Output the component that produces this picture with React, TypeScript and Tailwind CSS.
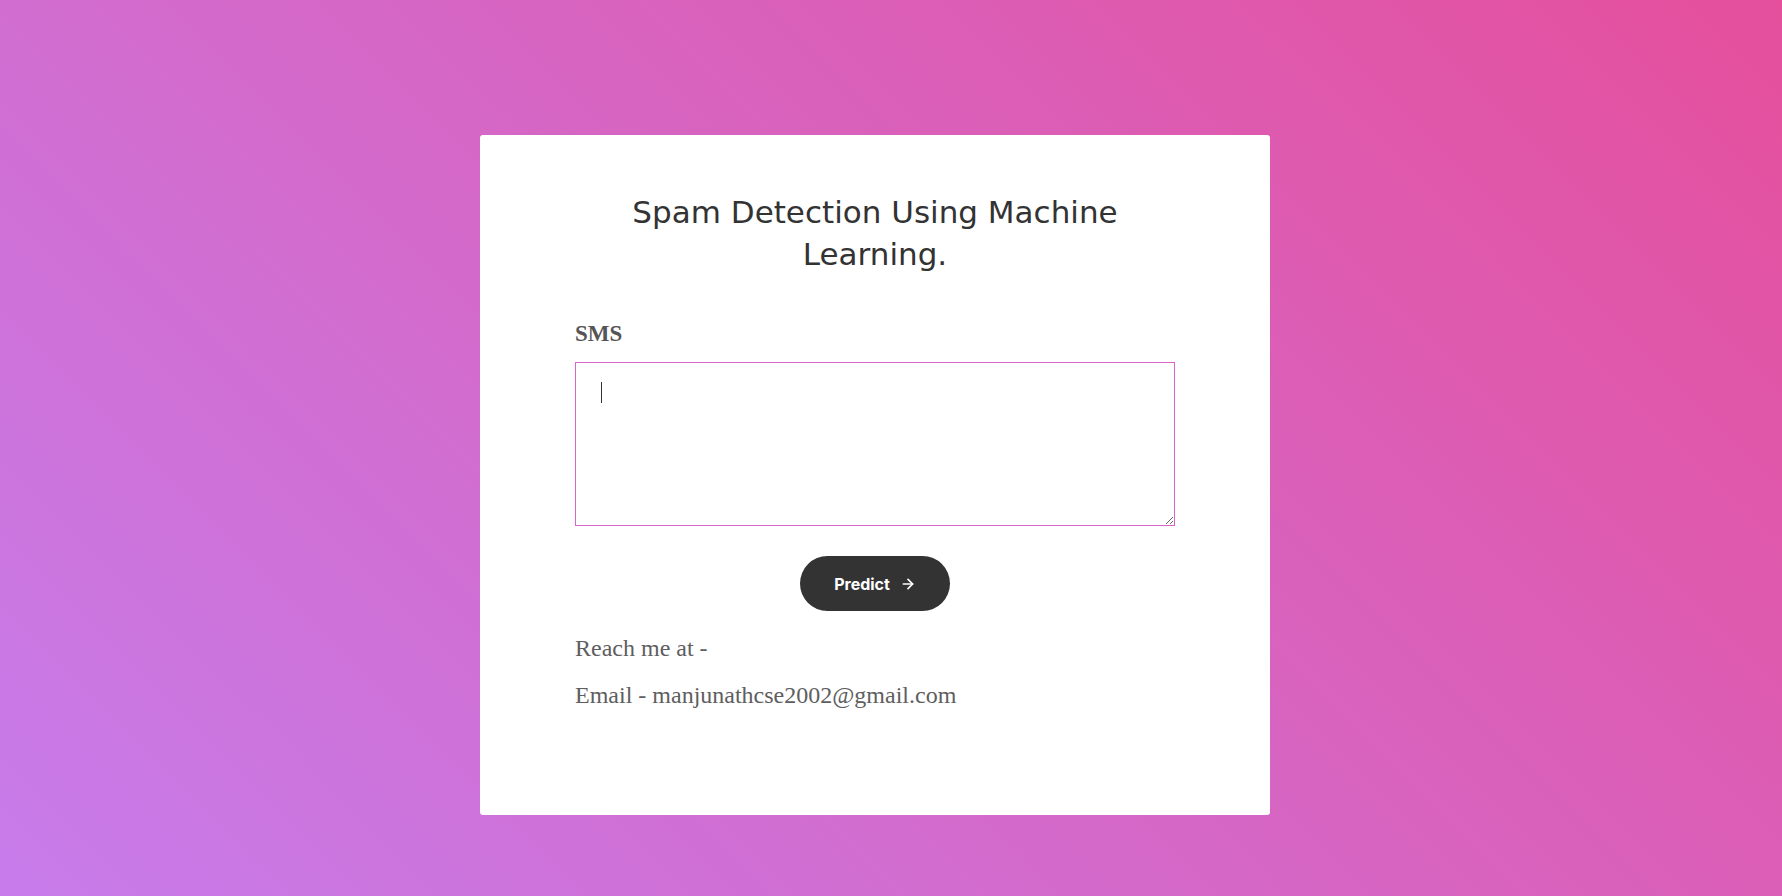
import React from "react";
import { ArrowRight } from "lucide-react";

export default function App() {
  return (
    <div className="w-full h-[896px] overflow-hidden bg-[linear-gradient(45deg,#c77ceb,#e54f9c)] flex justify-center pr-[32px]">
      <div className="mt-[135px] w-[790px] h-[680px] bg-white rounded-[3px] flex flex-col items-center">
        <h1 className="mt-[56px] text-center text-[31px] leading-[42px] text-[#333] font-normal font-['Comic_Sans_MS','DejaVu_Sans',sans-serif]">
          Spam Detection Using Machine
          <br />
          Learning.
        </h1>
        <div className="w-[600px] mt-[46px] flex flex-col">
          <label className="text-[23px] leading-[26px] font-bold text-[#555] font-['Liberation_Serif',serif]">
            SMS
          </label>
          <div className="relative mt-[15px]">
            <textarea
              className="block w-[600px] h-[164px] border border-[#d466cc] outline-none px-[25px] py-[20px] text-[18px] text-[#333] font-['Liberation_Sans',sans-serif]"
            />
            <span className="absolute left-[26px] top-[20px] w-px h-[21px] bg-[#333]" />
          </div>
          <div className="flex justify-center mt-[30px]">
            <button className="w-[150px] h-[55px] rounded-full bg-[#333] text-white text-[16px] font-bold flex items-center justify-center gap-[10px] font-['Inter',sans-serif]">
              <span>Predict</span>
              <ArrowRight size={16} strokeWidth={2.5} />
            </button>
          </div>
          <p className="mt-[25px] text-[24px] leading-[24px] text-[#5e5e5e] font-['Liberation_Serif',serif]">
            Reach me at -
          </p>
          <p className="mt-[23px] text-[24px] leading-[24px] text-[#5e5e5e] font-['Liberation_Serif',serif]">
            Email - manjunathcse2002@gmail.com
          </p>
        </div>
      </div>
    </div>
  );
}
